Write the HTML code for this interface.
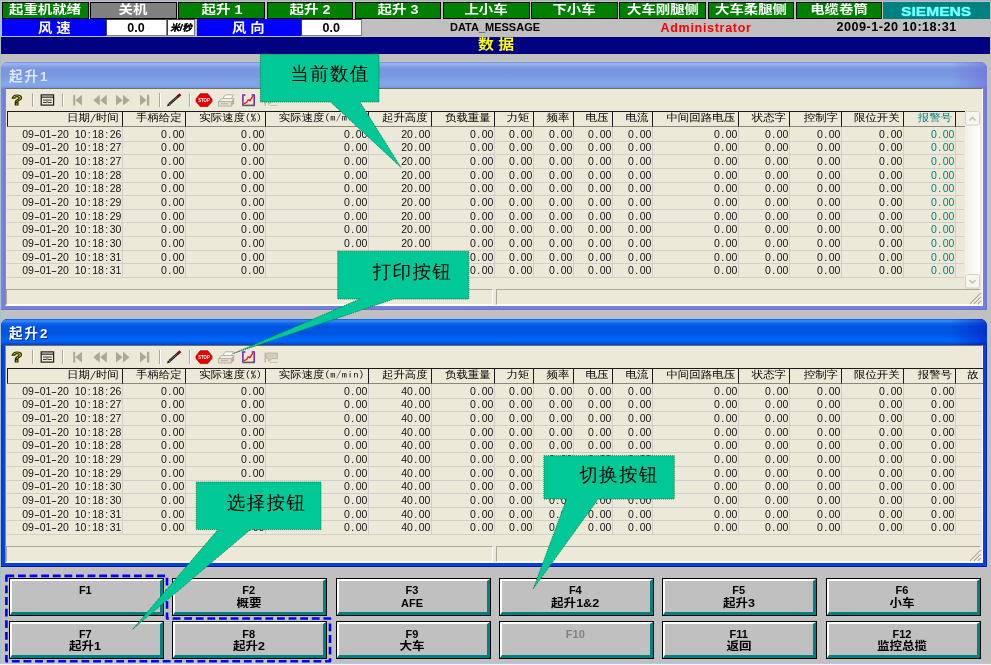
<!DOCTYPE html>
<html lang="zh"><head><meta charset="utf-8"><title>数据</title><style>
html,body{margin:0;padding:0}
body{width:991px;height:665px;background:#c0c0c0;position:relative;overflow:hidden;font-family:"Liberation Sans","Noto Sans CJK SC",sans-serif;font-size:12px;color:#000}
*{box-sizing:border-box}
div,span,svg{position:absolute}
.tc{top:2px;height:17px;border:1px solid #000;background:#008000;color:#fff;font-weight:bold;font-size:12px;line-height:15.8px;text-align:center;white-space:nowrap;overflow:hidden}
.tc span,.sx{position:relative;display:inline-block}
.lb{top:19px;height:17px;background:#0000ff;color:#fff;font-weight:bold;font-size:12.6px;line-height:16px;text-align:center}
.vb{top:19px;height:17px;background:#fff;border:1px solid #404040;border-right-color:#808080;border-bottom-color:#808080;font-weight:bold;font-size:12.5px;line-height:16.4px;text-align:center}
.t2{top:19px;height:17px;font-weight:bold;line-height:17px;white-space:nowrap}
.win{left:1px;width:986px;height:248px;border-radius:7px 7px 0 0;overflow:hidden}
.ttl{left:0;top:0;width:986px;height:26px}
.ttxt{left:8px;top:6.5px;color:#fff;font-weight:bold;font-size:13.5px;line-height:16px;white-space:nowrap;letter-spacing:2px}
.cli{left:4px;top:26px;width:978px;height:218px;background:#ece9d8;border-top:1px solid #716f64;border-left:1px solid #8f8d80;border-right:1px solid #fff;border-bottom:1px solid #fff}
/*hd*/.hd{background:#ece9d8;border-top:1px solid #1a1a1a;border-right:1px solid #1a1a1a;border-bottom:1px solid #8a887c;font-family:"WenQuanYi Zen Hei","Noto Sans CJK SC",sans-serif;font-size:11.7px;line-height:11.4px;text-align:right;white-space:nowrap;overflow:hidden;height:15.5px}
.hd span{position:relative;display:inline-block;transform:scale(0.98,0.88);transform-origin:100% 45%}
.hd i{font-style:normal;font-family:"IPAGothic","Liberation Mono",monospace;font-size:10.6px;letter-spacing:0.55px}
.vl{width:1px;background:#d0cfcb}
.hl{height:1px;background:#d0cfcb}
.c{font-family:"Liberation Sans",sans-serif;font-size:10.5px;line-height:13.65px;height:13.65px;text-align:right;white-space:pre;color:#111}
.c i{font-style:normal;display:inline-block;width:5.84px;text-align:center}
.c i.h{transform:scaleX(1.7)}
.btn{width:155px;height:38px;border:1px solid #000;background:#c0c0c0}
.btn b{position:absolute;left:0;top:0;width:153px;height:36px;border-style:solid;border-width:2px 3px 3px 2px;border-color:#fff #008080 #008080 #fff}
.btn p{position:absolute;margin:0;left:-1px;width:153px;top:5.4px;text-align:center;font-weight:bold;font-size:11px;line-height:12.5px;white-space:pre}
.co{font-family:"WenQuanYi Zen Hei","Noto Sans CJK SC",sans-serif;font-size:18.6px;line-height:20px;white-space:nowrap;color:#000;letter-spacing:1.2px}
</style></head><body><div id="root" style="left:0;top:0;width:991px;height:665px;will-change:transform">
<div class="tc" style="left:2.0px;width:86.6px"><span style="transform:scaleX(1.2)">起重机就绪</span></div>
<div class="tc" style="left:90.2px;width:86.6px;background:#808080"><span style="transform:scaleX(1.2)">关机</span></div>
<div class="tc" style="left:178.4px;width:86.6px"><span style="transform:scaleX(1.2)">起升 1</span></div>
<div class="tc" style="left:266.6px;width:86.6px"><span style="transform:scaleX(1.2)">起升 2</span></div>
<div class="tc" style="left:354.8px;width:86.6px"><span style="transform:scaleX(1.2)">起升 3</span></div>
<div class="tc" style="left:443.0px;width:86.6px"><span style="transform:scaleX(1.2)">上小车</span></div>
<div class="tc" style="left:531.2px;width:86.6px"><span style="transform:scaleX(1.2)">下小车</span></div>
<div class="tc" style="left:619.4px;width:86.6px"><span style="transform:scaleX(1.2)">大车刚腿侧</span></div>
<div class="tc" style="left:707.6px;width:86.6px"><span style="transform:scaleX(1.2)">大车柔腿侧</span></div>
<div class="tc" style="left:795.8px;width:86.6px"><span style="transform:scaleX(1.2)">电缆卷筒</span></div>
<div style="left:883px;top:2px;width:107px;height:17px;background:#008080;text-align:center;color:#8cffff;font-weight:bold;font-size:12.5px;line-height:20px;text-shadow:0 0 1px #00f4f4,0 0 1px #00f4f4"><span class="sx" style="transform:scaleX(1.25)">SIEMENS</span></div>
<div class="lb" style="left:2px;width:104px"><span class="sx" style="transform:scaleX(1.14);top:0.6px">风 速</span></div>
<div class="vb" style="left:105.5px;width:61px">0.0</div>
<div class="vb" style="left:166.5px;width:28.5px;font-size:9.5px;font-style:italic;letter-spacing:0;text-shadow:0.4px 0 0 #000">米/秒</div>
<div class="lb" style="left:196.5px;width:104.5px"><span class="sx" style="transform:scaleX(1.14);top:0.6px">风 向</span></div>
<div class="vb" style="left:300.5px;width:61.5px">0.0</div>
<div class="t2" style="left:450px;font-size:11px">DATA_MESSAGE</div>
<div class="t2" style="left:660.5px;top:20px;font-size:12.5px;color:#ff0000;letter-spacing:0.7px">Administrator</div>
<div class="t2" style="left:836.5px;font-size:12.7px;letter-spacing:0.45px">2009-1-20 10:18:31</div>
<div style="left:1px;top:37px;width:989px;height:17px;background:#000080;color:#ffff00;font-weight:bold;font-size:14px;line-height:15px;text-align:center"><span class="sx" style="transform:scaleX(1.13)">数 据</span></div>
<div class="win" style="top:62px;background:#7580dc;box-shadow:inset 0 -1px 0 #6a6fd0,inset 1px 0 0 #7a8ae0,inset -1px 0 0 #6c72d2"><div class="ttl" style="background:linear-gradient(180deg,#6f8fe2 0,#9db6ec 7%,#8aa5e6 15%,#7996df 26%,#7a98e0 55%,#84a7ea 80%,#82a4e8 92%,#7a92df 100%)"></div><div style="left:950px;top:0;width:36px;height:26px;background:linear-gradient(90deg,rgba(0,0,0,0),rgba(112,104,216,0.6))"></div><div class="ttxt" style="color:#dfe6fa">起升1</div><div class="cli"></div></div>
<svg style="left:5px;top:89px" width="290" height="23" viewBox="0 0 290 23"><text x="6.6" y="16.3" font-family="Liberation Sans,sans-serif" font-weight="bold" font-size="15" fill="#e8e400" stroke="#2e2e00" stroke-width="1.1" textLength="11" lengthAdjust="spacingAndGlyphs">?</text><rect x="27" y="4" width="1" height="14" fill="#aca899"/><rect x="28" y="4" width="1" height="14" fill="#fff"/><rect x="36.2" y="5.9" width="12.4" height="10.2" fill="#ece9d8" stroke="#1c1c1c" stroke-width="1.2"/><rect x="36" y="7.6" width="12.6" height="1.1" fill="#1c1c1c"/><rect x="38" y="10.6" width="8.8" height="1" fill="#3a3a3a"/><rect x="38" y="13" width="8.8" height="1" fill="#3a3a3a"/><rect x="41.5" y="10.6" width="1.6" height="3.4" fill="#8a8a8a"/><rect x="57" y="4" width="1" height="14" fill="#aca899"/><rect x="58" y="4" width="1" height="14" fill="#fff"/><rect x="68.2" y="5.8" width="2" height="10.8" fill="#aca899"/><path d="M77 5.8 L70.4 11.2 L77 16.6Z" fill="#aca899"/><path d="M94.8 5.8 L88.2 11.2 L94.8 16.6Z M101.8 5.8 L95.2 11.2 L101.8 16.6Z" fill="#aca899"/><path d="M111 5.8 L117.6 11.2 L111 16.6Z M118 5.8 L124.6 11.2 L118 16.6Z" fill="#aca899"/><path d="M135 5.8 L141.6 11.2 L135 16.6Z" fill="#aca899"/><rect x="142" y="5.8" width="2.2" height="10.8" fill="#aca899"/><rect x="154" y="4" width="1" height="14" fill="#aca899"/><rect x="155" y="4" width="1" height="14" fill="#fff"/><path d="M164.4 15 L173 7.4" stroke="#1e1e1e" stroke-width="2.5" fill="none"/><path d="M164.6 14.8 L172.6 7.7" stroke="#8a8880" stroke-width="0.7" fill="none"/><path d="M162 17.4 L163 14.2 L165.4 16.2 Z" fill="#1e1e1e"/><path d="M172.6 7.8 L175.4 5.3" stroke="#8e0016" stroke-width="2.7" fill="none"/><rect x="184" y="4" width="1" height="14" fill="#aca899"/><rect x="185" y="4" width="1" height="14" fill="#fff"/><path d="M195.2 4.7 L202.8 4.7 L207 10 L207 12.4 L202.8 17.6 L195.2 17.6 L191 12.4 L191 10Z" fill="#e60000" stroke="#b00000" stroke-width="0.7"/><text x="199" y="13.4" text-anchor="middle" font-family="Liberation Sans,sans-serif" font-weight="bold" font-size="5.6" fill="#fff" textLength="11.5" lengthAdjust="spacingAndGlyphs">STOP</text><path d="M217.5 9.8 L220.5 5.8 L228.6 5.8 L226.2 9.8 Z" fill="#fbfaf6" stroke="#b4b1a2" stroke-width="1"/><path d="M213.6 12.6 L216.6 9.6 L229 9.6 L226.6 12.6 Z" fill="#f2f0e6" stroke="#b4b1a2" stroke-width="1"/><rect x="213.6" y="12.6" width="13" height="4.4" fill="#e2dfd0" stroke="#b4b1a2" stroke-width="1"/><path d="M226.6 12.6 L229.2 9.8 L229.2 14.2 L226.6 17Z" fill="#b4b1a2"/><rect x="216" y="14.2" width="7" height="1" fill="#b4b1a2"/><rect x="237.2" y="15.6" width="12.8" height="1.6" fill="#5a5a5a"/><path d="M240.4 6 H237.9 V16 M246.6 6 H249.2 V16" fill="none" stroke="#7a1fa8" stroke-width="1.5"/><path d="M239 14.6 L241.6 13.6 L243.2 10.8 L245 11.6 L247.8 7.2" fill="none" stroke="#e8141c" stroke-width="1.3"/><path d="M260.2 6.4 V16.6" stroke="#b4b1a2" stroke-width="1.3" fill="none"/><path d="M261.6 7 H272.4 V12.6 H267 L263.6 15.6 V12.6 H261.6 Z" fill="#d0cdbe" stroke="#b9b6a8" stroke-width="0.9"/><path d="M265 16.4 H272.6" stroke="#c4c1b2" stroke-width="1"/></svg>
<div class="hd" style="left:7px;top:111px;width:116px;padding-right:3.2px;border-left:1px solid #1a1a1a"><span>日期/时间</span></div>
<div class="hd" style="left:123px;top:111px;width:63px;padding-right:3.2px"><span>手柄给定</span></div>
<div class="hd" style="left:186px;top:111px;width:80px;padding-right:3.2px"><span>实际速度<i>(%)</i></span></div>
<div class="hd" style="left:266px;top:111px;width:103px;padding-right:3.2px"><span>实际速度<i>(m/min)</i></span></div>
<div class="hd" style="left:369px;top:111px;width:63px;padding-right:3.2px"><span>起升高度</span></div>
<div class="hd" style="left:432px;top:111px;width:63px;padding-right:3.2px"><span>负载重量</span></div>
<div class="hd" style="left:495px;top:111px;width:39px;padding-right:3.2px"><span>力矩</span></div>
<div class="hd" style="left:534px;top:111px;width:40px;padding-right:3.2px"><span>频率</span></div>
<div class="hd" style="left:574px;top:111px;width:39px;padding-right:3.2px"><span>电压</span></div>
<div class="hd" style="left:613px;top:111px;width:40px;padding-right:3.2px"><span>电流</span></div>
<div class="hd" style="left:653px;top:111px;width:86px;padding-right:3.2px"><span>中间回路电压</span></div>
<div class="hd" style="left:739px;top:111px;width:51px;padding-right:3.2px"><span>状态字</span></div>
<div class="hd" style="left:790px;top:111px;width:52px;padding-right:3.2px"><span>控制字</span></div>
<div class="hd" style="left:842px;top:111px;width:62px;padding-right:3.2px"><span>限位开关</span></div>
<div class="hd" style="left:904px;top:111px;width:52px;padding-right:3.2px;color:#008080"><span>报警号</span></div>
<div class="hd" style="left:956px;top:111px;width:9px;border-right:none"></div>
<div class="hl" style="left:7px;top:141px;width:957px"></div>
<div class="hl" style="left:7px;top:154px;width:957px"></div>
<div class="hl" style="left:7px;top:168px;width:957px"></div>
<div class="hl" style="left:7px;top:182px;width:957px"></div>
<div class="hl" style="left:7px;top:195px;width:957px"></div>
<div class="hl" style="left:7px;top:209px;width:957px"></div>
<div class="hl" style="left:7px;top:222px;width:957px"></div>
<div class="hl" style="left:7px;top:236px;width:957px"></div>
<div class="hl" style="left:7px;top:250px;width:957px"></div>
<div class="hl" style="left:7px;top:263px;width:957px"></div>
<div class="hl" style="left:7px;top:277px;width:957px"></div>
<div class="vl" style="left:122px;top:127px;height:150px"></div>
<div class="vl" style="left:185px;top:127px;height:150px"></div>
<div class="vl" style="left:265px;top:127px;height:150px"></div>
<div class="vl" style="left:368px;top:127px;height:150px"></div>
<div class="vl" style="left:431px;top:127px;height:150px"></div>
<div class="vl" style="left:494px;top:127px;height:150px"></div>
<div class="vl" style="left:533px;top:127px;height:150px"></div>
<div class="vl" style="left:573px;top:127px;height:150px"></div>
<div class="vl" style="left:612px;top:127px;height:150px"></div>
<div class="vl" style="left:652px;top:127px;height:150px"></div>
<div class="vl" style="left:738px;top:127px;height:150px"></div>
<div class="vl" style="left:789px;top:127px;height:150px"></div>
<div class="vl" style="left:841px;top:127px;height:150px"></div>
<div class="vl" style="left:903px;top:127px;height:150px"></div>
<div class="vl" style="left:955px;top:127px;height:150px"></div>
<div class="c" style="left:7px;top:127.70px;width:114.4px">09<i class="h">-</i>01<i class="h">-</i>20<i> </i>10<i>:</i>18<i>:</i>26</div>
<div class="c" style="left:122px;top:127.70px;width:62.4px">0<i>.</i>00</div>
<div class="c" style="left:185px;top:127.70px;width:79.4px">0<i>.</i>00</div>
<div class="c" style="left:265px;top:127.70px;width:102.4px">0<i>.</i>00</div>
<div class="c" style="left:368px;top:127.70px;width:62.4px">20<i>.</i>00</div>
<div class="c" style="left:431px;top:127.70px;width:62.4px">0<i>.</i>00</div>
<div class="c" style="left:494px;top:127.70px;width:38.4px">0<i>.</i>00</div>
<div class="c" style="left:533px;top:127.70px;width:39.4px">0<i>.</i>00</div>
<div class="c" style="left:573px;top:127.70px;width:38.4px">0<i>.</i>00</div>
<div class="c" style="left:612px;top:127.70px;width:39.4px">0<i>.</i>00</div>
<div class="c" style="left:652px;top:127.70px;width:85.4px">0<i>.</i>00</div>
<div class="c" style="left:738px;top:127.70px;width:50.4px">0<i>.</i>00</div>
<div class="c" style="left:789px;top:127.70px;width:51.4px">0<i>.</i>00</div>
<div class="c" style="left:841px;top:127.70px;width:61.4px">0<i>.</i>00</div>
<div class="c" style="left:903px;top:127.70px;width:51.4px;color:#008080">0<i>.</i>00</div>
<div class="c" style="left:7px;top:141.35px;width:114.4px">09<i class="h">-</i>01<i class="h">-</i>20<i> </i>10<i>:</i>18<i>:</i>27</div>
<div class="c" style="left:122px;top:141.35px;width:62.4px">0<i>.</i>00</div>
<div class="c" style="left:185px;top:141.35px;width:79.4px">0<i>.</i>00</div>
<div class="c" style="left:265px;top:141.35px;width:102.4px">0<i>.</i>00</div>
<div class="c" style="left:368px;top:141.35px;width:62.4px">20<i>.</i>00</div>
<div class="c" style="left:431px;top:141.35px;width:62.4px">0<i>.</i>00</div>
<div class="c" style="left:494px;top:141.35px;width:38.4px">0<i>.</i>00</div>
<div class="c" style="left:533px;top:141.35px;width:39.4px">0<i>.</i>00</div>
<div class="c" style="left:573px;top:141.35px;width:38.4px">0<i>.</i>00</div>
<div class="c" style="left:612px;top:141.35px;width:39.4px">0<i>.</i>00</div>
<div class="c" style="left:652px;top:141.35px;width:85.4px">0<i>.</i>00</div>
<div class="c" style="left:738px;top:141.35px;width:50.4px">0<i>.</i>00</div>
<div class="c" style="left:789px;top:141.35px;width:51.4px">0<i>.</i>00</div>
<div class="c" style="left:841px;top:141.35px;width:61.4px">0<i>.</i>00</div>
<div class="c" style="left:903px;top:141.35px;width:51.4px;color:#008080">0<i>.</i>00</div>
<div class="c" style="left:7px;top:155.00px;width:114.4px">09<i class="h">-</i>01<i class="h">-</i>20<i> </i>10<i>:</i>18<i>:</i>27</div>
<div class="c" style="left:122px;top:155.00px;width:62.4px">0<i>.</i>00</div>
<div class="c" style="left:185px;top:155.00px;width:79.4px">0<i>.</i>00</div>
<div class="c" style="left:265px;top:155.00px;width:102.4px">0<i>.</i>00</div>
<div class="c" style="left:368px;top:155.00px;width:62.4px">20<i>.</i>00</div>
<div class="c" style="left:431px;top:155.00px;width:62.4px">0<i>.</i>00</div>
<div class="c" style="left:494px;top:155.00px;width:38.4px">0<i>.</i>00</div>
<div class="c" style="left:533px;top:155.00px;width:39.4px">0<i>.</i>00</div>
<div class="c" style="left:573px;top:155.00px;width:38.4px">0<i>.</i>00</div>
<div class="c" style="left:612px;top:155.00px;width:39.4px">0<i>.</i>00</div>
<div class="c" style="left:652px;top:155.00px;width:85.4px">0<i>.</i>00</div>
<div class="c" style="left:738px;top:155.00px;width:50.4px">0<i>.</i>00</div>
<div class="c" style="left:789px;top:155.00px;width:51.4px">0<i>.</i>00</div>
<div class="c" style="left:841px;top:155.00px;width:61.4px">0<i>.</i>00</div>
<div class="c" style="left:903px;top:155.00px;width:51.4px;color:#008080">0<i>.</i>00</div>
<div class="c" style="left:7px;top:168.65px;width:114.4px">09<i class="h">-</i>01<i class="h">-</i>20<i> </i>10<i>:</i>18<i>:</i>28</div>
<div class="c" style="left:122px;top:168.65px;width:62.4px">0<i>.</i>00</div>
<div class="c" style="left:185px;top:168.65px;width:79.4px">0<i>.</i>00</div>
<div class="c" style="left:265px;top:168.65px;width:102.4px">0<i>.</i>00</div>
<div class="c" style="left:368px;top:168.65px;width:62.4px">20<i>.</i>00</div>
<div class="c" style="left:431px;top:168.65px;width:62.4px">0<i>.</i>00</div>
<div class="c" style="left:494px;top:168.65px;width:38.4px">0<i>.</i>00</div>
<div class="c" style="left:533px;top:168.65px;width:39.4px">0<i>.</i>00</div>
<div class="c" style="left:573px;top:168.65px;width:38.4px">0<i>.</i>00</div>
<div class="c" style="left:612px;top:168.65px;width:39.4px">0<i>.</i>00</div>
<div class="c" style="left:652px;top:168.65px;width:85.4px">0<i>.</i>00</div>
<div class="c" style="left:738px;top:168.65px;width:50.4px">0<i>.</i>00</div>
<div class="c" style="left:789px;top:168.65px;width:51.4px">0<i>.</i>00</div>
<div class="c" style="left:841px;top:168.65px;width:61.4px">0<i>.</i>00</div>
<div class="c" style="left:903px;top:168.65px;width:51.4px;color:#008080">0<i>.</i>00</div>
<div class="c" style="left:7px;top:182.30px;width:114.4px">09<i class="h">-</i>01<i class="h">-</i>20<i> </i>10<i>:</i>18<i>:</i>28</div>
<div class="c" style="left:122px;top:182.30px;width:62.4px">0<i>.</i>00</div>
<div class="c" style="left:185px;top:182.30px;width:79.4px">0<i>.</i>00</div>
<div class="c" style="left:265px;top:182.30px;width:102.4px">0<i>.</i>00</div>
<div class="c" style="left:368px;top:182.30px;width:62.4px">20<i>.</i>00</div>
<div class="c" style="left:431px;top:182.30px;width:62.4px">0<i>.</i>00</div>
<div class="c" style="left:494px;top:182.30px;width:38.4px">0<i>.</i>00</div>
<div class="c" style="left:533px;top:182.30px;width:39.4px">0<i>.</i>00</div>
<div class="c" style="left:573px;top:182.30px;width:38.4px">0<i>.</i>00</div>
<div class="c" style="left:612px;top:182.30px;width:39.4px">0<i>.</i>00</div>
<div class="c" style="left:652px;top:182.30px;width:85.4px">0<i>.</i>00</div>
<div class="c" style="left:738px;top:182.30px;width:50.4px">0<i>.</i>00</div>
<div class="c" style="left:789px;top:182.30px;width:51.4px">0<i>.</i>00</div>
<div class="c" style="left:841px;top:182.30px;width:61.4px">0<i>.</i>00</div>
<div class="c" style="left:903px;top:182.30px;width:51.4px;color:#008080">0<i>.</i>00</div>
<div class="c" style="left:7px;top:195.95px;width:114.4px">09<i class="h">-</i>01<i class="h">-</i>20<i> </i>10<i>:</i>18<i>:</i>29</div>
<div class="c" style="left:122px;top:195.95px;width:62.4px">0<i>.</i>00</div>
<div class="c" style="left:185px;top:195.95px;width:79.4px">0<i>.</i>00</div>
<div class="c" style="left:265px;top:195.95px;width:102.4px">0<i>.</i>00</div>
<div class="c" style="left:368px;top:195.95px;width:62.4px">20<i>.</i>00</div>
<div class="c" style="left:431px;top:195.95px;width:62.4px">0<i>.</i>00</div>
<div class="c" style="left:494px;top:195.95px;width:38.4px">0<i>.</i>00</div>
<div class="c" style="left:533px;top:195.95px;width:39.4px">0<i>.</i>00</div>
<div class="c" style="left:573px;top:195.95px;width:38.4px">0<i>.</i>00</div>
<div class="c" style="left:612px;top:195.95px;width:39.4px">0<i>.</i>00</div>
<div class="c" style="left:652px;top:195.95px;width:85.4px">0<i>.</i>00</div>
<div class="c" style="left:738px;top:195.95px;width:50.4px">0<i>.</i>00</div>
<div class="c" style="left:789px;top:195.95px;width:51.4px">0<i>.</i>00</div>
<div class="c" style="left:841px;top:195.95px;width:61.4px">0<i>.</i>00</div>
<div class="c" style="left:903px;top:195.95px;width:51.4px;color:#008080">0<i>.</i>00</div>
<div class="c" style="left:7px;top:209.60px;width:114.4px">09<i class="h">-</i>01<i class="h">-</i>20<i> </i>10<i>:</i>18<i>:</i>29</div>
<div class="c" style="left:122px;top:209.60px;width:62.4px">0<i>.</i>00</div>
<div class="c" style="left:185px;top:209.60px;width:79.4px">0<i>.</i>00</div>
<div class="c" style="left:265px;top:209.60px;width:102.4px">0<i>.</i>00</div>
<div class="c" style="left:368px;top:209.60px;width:62.4px">20<i>.</i>00</div>
<div class="c" style="left:431px;top:209.60px;width:62.4px">0<i>.</i>00</div>
<div class="c" style="left:494px;top:209.60px;width:38.4px">0<i>.</i>00</div>
<div class="c" style="left:533px;top:209.60px;width:39.4px">0<i>.</i>00</div>
<div class="c" style="left:573px;top:209.60px;width:38.4px">0<i>.</i>00</div>
<div class="c" style="left:612px;top:209.60px;width:39.4px">0<i>.</i>00</div>
<div class="c" style="left:652px;top:209.60px;width:85.4px">0<i>.</i>00</div>
<div class="c" style="left:738px;top:209.60px;width:50.4px">0<i>.</i>00</div>
<div class="c" style="left:789px;top:209.60px;width:51.4px">0<i>.</i>00</div>
<div class="c" style="left:841px;top:209.60px;width:61.4px">0<i>.</i>00</div>
<div class="c" style="left:903px;top:209.60px;width:51.4px;color:#008080">0<i>.</i>00</div>
<div class="c" style="left:7px;top:223.25px;width:114.4px">09<i class="h">-</i>01<i class="h">-</i>20<i> </i>10<i>:</i>18<i>:</i>30</div>
<div class="c" style="left:122px;top:223.25px;width:62.4px">0<i>.</i>00</div>
<div class="c" style="left:185px;top:223.25px;width:79.4px">0<i>.</i>00</div>
<div class="c" style="left:265px;top:223.25px;width:102.4px">0<i>.</i>00</div>
<div class="c" style="left:368px;top:223.25px;width:62.4px">20<i>.</i>00</div>
<div class="c" style="left:431px;top:223.25px;width:62.4px">0<i>.</i>00</div>
<div class="c" style="left:494px;top:223.25px;width:38.4px">0<i>.</i>00</div>
<div class="c" style="left:533px;top:223.25px;width:39.4px">0<i>.</i>00</div>
<div class="c" style="left:573px;top:223.25px;width:38.4px">0<i>.</i>00</div>
<div class="c" style="left:612px;top:223.25px;width:39.4px">0<i>.</i>00</div>
<div class="c" style="left:652px;top:223.25px;width:85.4px">0<i>.</i>00</div>
<div class="c" style="left:738px;top:223.25px;width:50.4px">0<i>.</i>00</div>
<div class="c" style="left:789px;top:223.25px;width:51.4px">0<i>.</i>00</div>
<div class="c" style="left:841px;top:223.25px;width:61.4px">0<i>.</i>00</div>
<div class="c" style="left:903px;top:223.25px;width:51.4px;color:#008080">0<i>.</i>00</div>
<div class="c" style="left:7px;top:236.90px;width:114.4px">09<i class="h">-</i>01<i class="h">-</i>20<i> </i>10<i>:</i>18<i>:</i>30</div>
<div class="c" style="left:122px;top:236.90px;width:62.4px">0<i>.</i>00</div>
<div class="c" style="left:185px;top:236.90px;width:79.4px">0<i>.</i>00</div>
<div class="c" style="left:265px;top:236.90px;width:102.4px">0<i>.</i>00</div>
<div class="c" style="left:368px;top:236.90px;width:62.4px">20<i>.</i>00</div>
<div class="c" style="left:431px;top:236.90px;width:62.4px">0<i>.</i>00</div>
<div class="c" style="left:494px;top:236.90px;width:38.4px">0<i>.</i>00</div>
<div class="c" style="left:533px;top:236.90px;width:39.4px">0<i>.</i>00</div>
<div class="c" style="left:573px;top:236.90px;width:38.4px">0<i>.</i>00</div>
<div class="c" style="left:612px;top:236.90px;width:39.4px">0<i>.</i>00</div>
<div class="c" style="left:652px;top:236.90px;width:85.4px">0<i>.</i>00</div>
<div class="c" style="left:738px;top:236.90px;width:50.4px">0<i>.</i>00</div>
<div class="c" style="left:789px;top:236.90px;width:51.4px">0<i>.</i>00</div>
<div class="c" style="left:841px;top:236.90px;width:61.4px">0<i>.</i>00</div>
<div class="c" style="left:903px;top:236.90px;width:51.4px;color:#008080">0<i>.</i>00</div>
<div class="c" style="left:7px;top:250.55px;width:114.4px">09<i class="h">-</i>01<i class="h">-</i>20<i> </i>10<i>:</i>18<i>:</i>31</div>
<div class="c" style="left:122px;top:250.55px;width:62.4px">0<i>.</i>00</div>
<div class="c" style="left:185px;top:250.55px;width:79.4px">0<i>.</i>00</div>
<div class="c" style="left:265px;top:250.55px;width:102.4px">0<i>.</i>00</div>
<div class="c" style="left:368px;top:250.55px;width:62.4px">20<i>.</i>00</div>
<div class="c" style="left:431px;top:250.55px;width:62.4px">0<i>.</i>00</div>
<div class="c" style="left:494px;top:250.55px;width:38.4px">0<i>.</i>00</div>
<div class="c" style="left:533px;top:250.55px;width:39.4px">0<i>.</i>00</div>
<div class="c" style="left:573px;top:250.55px;width:38.4px">0<i>.</i>00</div>
<div class="c" style="left:612px;top:250.55px;width:39.4px">0<i>.</i>00</div>
<div class="c" style="left:652px;top:250.55px;width:85.4px">0<i>.</i>00</div>
<div class="c" style="left:738px;top:250.55px;width:50.4px">0<i>.</i>00</div>
<div class="c" style="left:789px;top:250.55px;width:51.4px">0<i>.</i>00</div>
<div class="c" style="left:841px;top:250.55px;width:61.4px">0<i>.</i>00</div>
<div class="c" style="left:903px;top:250.55px;width:51.4px;color:#008080">0<i>.</i>00</div>
<div class="c" style="left:7px;top:264.20px;width:114.4px">09<i class="h">-</i>01<i class="h">-</i>20<i> </i>10<i>:</i>18<i>:</i>31</div>
<div class="c" style="left:122px;top:264.20px;width:62.4px">0<i>.</i>00</div>
<div class="c" style="left:185px;top:264.20px;width:79.4px">0<i>.</i>00</div>
<div class="c" style="left:265px;top:264.20px;width:102.4px">0<i>.</i>00</div>
<div class="c" style="left:368px;top:264.20px;width:62.4px">20<i>.</i>00</div>
<div class="c" style="left:431px;top:264.20px;width:62.4px">0<i>.</i>00</div>
<div class="c" style="left:494px;top:264.20px;width:38.4px">0<i>.</i>00</div>
<div class="c" style="left:533px;top:264.20px;width:39.4px">0<i>.</i>00</div>
<div class="c" style="left:573px;top:264.20px;width:38.4px">0<i>.</i>00</div>
<div class="c" style="left:612px;top:264.20px;width:39.4px">0<i>.</i>00</div>
<div class="c" style="left:652px;top:264.20px;width:85.4px">0<i>.</i>00</div>
<div class="c" style="left:738px;top:264.20px;width:50.4px">0<i>.</i>00</div>
<div class="c" style="left:789px;top:264.20px;width:51.4px">0<i>.</i>00</div>
<div class="c" style="left:841px;top:264.20px;width:61.4px">0<i>.</i>00</div>
<div class="c" style="left:903px;top:264.20px;width:51.4px;color:#008080">0<i>.</i>00</div>
<div style="left:6px;top:289.0px;width:487px;height:16px;border:1px solid;border-color:#aca899 #fff #fff #aca899"></div>
<div style="left:495.5px;top:289.0px;width:485.5px;height:16px;border:1px solid;border-color:#aca899 #fff #fff #aca899"></div>
<svg style="left:969px;top:292.0px" width="13" height="13" viewBox="0 0 13 13"><path d="M12 1 L1 12 M12 5 L5 12 M12 9 L9 12" stroke="#aca899" stroke-width="1.3"/><path d="M12 2.3 L2.3 12 M12 6.3 L6.3 12 M12 10.3 L10.3 12" stroke="#fff" stroke-width="0.8"/></svg>
<div style="left:965px;top:111.5px;width:15px;height:175.5px;background:linear-gradient(90deg,#f0efe8,#fefefc)"></div>
<svg style="left:965px;top:110.5px" width="15" height="15" viewBox="0 0 15 15"><rect x="0.5" y="0.5" width="14" height="13.5" rx="2" fill="#f6f5ef" stroke="#d2cfc2"/><path d="M4.5 9.5 L7.5 6.5 L10.5 9.5" fill="none" stroke="#c6c4b6" stroke-width="1.6"/></svg>
<svg style="left:965px;top:273.5px" width="15" height="15" viewBox="0 0 15 15"><rect x="0.5" y="0.5" width="14" height="13.5" rx="2" fill="#f6f5ef" stroke="#d2cfc2"/><path d="M4.5 6 L7.5 9 L10.5 6" fill="none" stroke="#c6c4b6" stroke-width="1.6"/></svg>
<div class="win" style="top:319px;background:#0842de;box-shadow:inset 0 -1px 0 #001c9c,inset 1px 0 0 #0430c0,inset -1px 0 0 #0022b0"><div class="ttl" style="background:linear-gradient(180deg,#0a58e6 0,#3a8cf8 7%,#1068ee 16%,#0055e2 28%,#0054e0 55%,#0062f4 75%,#0064f6 88%,#0048d6 96%,#0040c8 100%)"></div><div style="left:950px;top:0;width:36px;height:26px;background:linear-gradient(90deg,rgba(0,0,0,0),rgba(0,20,190,0.55))"></div><div class="ttxt" style="text-shadow:1px 1px 0 #0a2a9a">起升2</div><div class="cli"></div></div>
<svg style="left:5px;top:346px" width="290" height="23" viewBox="0 0 290 23"><text x="6.6" y="16.3" font-family="Liberation Sans,sans-serif" font-weight="bold" font-size="15" fill="#e8e400" stroke="#2e2e00" stroke-width="1.1" textLength="11" lengthAdjust="spacingAndGlyphs">?</text><rect x="27" y="4" width="1" height="14" fill="#aca899"/><rect x="28" y="4" width="1" height="14" fill="#fff"/><rect x="36.2" y="5.9" width="12.4" height="10.2" fill="#ece9d8" stroke="#1c1c1c" stroke-width="1.2"/><rect x="36" y="7.6" width="12.6" height="1.1" fill="#1c1c1c"/><rect x="38" y="10.6" width="8.8" height="1" fill="#3a3a3a"/><rect x="38" y="13" width="8.8" height="1" fill="#3a3a3a"/><rect x="41.5" y="10.6" width="1.6" height="3.4" fill="#8a8a8a"/><rect x="57" y="4" width="1" height="14" fill="#aca899"/><rect x="58" y="4" width="1" height="14" fill="#fff"/><rect x="68.2" y="5.8" width="2" height="10.8" fill="#aca899"/><path d="M77 5.8 L70.4 11.2 L77 16.6Z" fill="#aca899"/><path d="M94.8 5.8 L88.2 11.2 L94.8 16.6Z M101.8 5.8 L95.2 11.2 L101.8 16.6Z" fill="#aca899"/><path d="M111 5.8 L117.6 11.2 L111 16.6Z M118 5.8 L124.6 11.2 L118 16.6Z" fill="#aca899"/><path d="M135 5.8 L141.6 11.2 L135 16.6Z" fill="#aca899"/><rect x="142" y="5.8" width="2.2" height="10.8" fill="#aca899"/><rect x="154" y="4" width="1" height="14" fill="#aca899"/><rect x="155" y="4" width="1" height="14" fill="#fff"/><path d="M164.4 15 L173 7.4" stroke="#1e1e1e" stroke-width="2.5" fill="none"/><path d="M164.6 14.8 L172.6 7.7" stroke="#8a8880" stroke-width="0.7" fill="none"/><path d="M162 17.4 L163 14.2 L165.4 16.2 Z" fill="#1e1e1e"/><path d="M172.6 7.8 L175.4 5.3" stroke="#8e0016" stroke-width="2.7" fill="none"/><rect x="184" y="4" width="1" height="14" fill="#aca899"/><rect x="185" y="4" width="1" height="14" fill="#fff"/><path d="M195.2 4.7 L202.8 4.7 L207 10 L207 12.4 L202.8 17.6 L195.2 17.6 L191 12.4 L191 10Z" fill="#e60000" stroke="#b00000" stroke-width="0.7"/><text x="199" y="13.4" text-anchor="middle" font-family="Liberation Sans,sans-serif" font-weight="bold" font-size="5.6" fill="#fff" textLength="11.5" lengthAdjust="spacingAndGlyphs">STOP</text><path d="M217.5 9.8 L220.5 5.8 L228.6 5.8 L226.2 9.8 Z" fill="#fbfaf6" stroke="#b4b1a2" stroke-width="1"/><path d="M213.6 12.6 L216.6 9.6 L229 9.6 L226.6 12.6 Z" fill="#f2f0e6" stroke="#b4b1a2" stroke-width="1"/><rect x="213.6" y="12.6" width="13" height="4.4" fill="#e2dfd0" stroke="#b4b1a2" stroke-width="1"/><path d="M226.6 12.6 L229.2 9.8 L229.2 14.2 L226.6 17Z" fill="#b4b1a2"/><rect x="216" y="14.2" width="7" height="1" fill="#b4b1a2"/><rect x="237.2" y="15.6" width="12.8" height="1.6" fill="#5a5a5a"/><path d="M240.4 6 H237.9 V16 M246.6 6 H249.2 V16" fill="none" stroke="#7a1fa8" stroke-width="1.5"/><path d="M239 14.6 L241.6 13.6 L243.2 10.8 L245 11.6 L247.8 7.2" fill="none" stroke="#e8141c" stroke-width="1.3"/><path d="M260.2 6.4 V16.6" stroke="#b4b1a2" stroke-width="1.3" fill="none"/><path d="M261.6 7 H272.4 V12.6 H267 L263.6 15.6 V12.6 H261.6 Z" fill="#d0cdbe" stroke="#b9b6a8" stroke-width="0.9"/><path d="M265 16.4 H272.6" stroke="#c4c1b2" stroke-width="1"/></svg>
<div class="hd" style="left:7px;top:368px;width:116px;padding-right:3.2px;border-left:1px solid #1a1a1a"><span>日期/时间</span></div>
<div class="hd" style="left:123px;top:368px;width:63px;padding-right:3.2px"><span>手柄给定</span></div>
<div class="hd" style="left:186px;top:368px;width:80px;padding-right:3.2px"><span>实际速度<i>(%)</i></span></div>
<div class="hd" style="left:266px;top:368px;width:103px;padding-right:3.2px"><span>实际速度<i>(m/min)</i></span></div>
<div class="hd" style="left:369px;top:368px;width:63px;padding-right:3.2px"><span>起升高度</span></div>
<div class="hd" style="left:432px;top:368px;width:63px;padding-right:3.2px"><span>负载重量</span></div>
<div class="hd" style="left:495px;top:368px;width:39px;padding-right:3.2px"><span>力矩</span></div>
<div class="hd" style="left:534px;top:368px;width:40px;padding-right:3.2px"><span>频率</span></div>
<div class="hd" style="left:574px;top:368px;width:39px;padding-right:3.2px"><span>电压</span></div>
<div class="hd" style="left:613px;top:368px;width:40px;padding-right:3.2px"><span>电流</span></div>
<div class="hd" style="left:653px;top:368px;width:86px;padding-right:3.2px"><span>中间回路电压</span></div>
<div class="hd" style="left:739px;top:368px;width:51px;padding-right:3.2px"><span>状态字</span></div>
<div class="hd" style="left:790px;top:368px;width:52px;padding-right:3.2px"><span>控制字</span></div>
<div class="hd" style="left:842px;top:368px;width:62px;padding-right:3.2px"><span>限位开关</span></div>
<div class="hd" style="left:904px;top:368px;width:52px;padding-right:3.2px"><span>报警号</span></div>
<div class="hd" style="left:956px;top:368px;width:27px;border-right:none;text-align:left;padding-left:10.5px"><span>故</span></div>
<div class="hl" style="left:7px;top:398px;width:975px"></div>
<div class="hl" style="left:7px;top:411px;width:975px"></div>
<div class="hl" style="left:7px;top:425px;width:975px"></div>
<div class="hl" style="left:7px;top:439px;width:975px"></div>
<div class="hl" style="left:7px;top:452px;width:975px"></div>
<div class="hl" style="left:7px;top:466px;width:975px"></div>
<div class="hl" style="left:7px;top:480px;width:975px"></div>
<div class="hl" style="left:7px;top:493px;width:975px"></div>
<div class="hl" style="left:7px;top:507px;width:975px"></div>
<div class="hl" style="left:7px;top:520px;width:975px"></div>
<div class="hl" style="left:7px;top:534px;width:975px"></div>
<div class="vl" style="left:122px;top:384px;height:150px"></div>
<div class="vl" style="left:185px;top:384px;height:150px"></div>
<div class="vl" style="left:265px;top:384px;height:150px"></div>
<div class="vl" style="left:368px;top:384px;height:150px"></div>
<div class="vl" style="left:431px;top:384px;height:150px"></div>
<div class="vl" style="left:494px;top:384px;height:150px"></div>
<div class="vl" style="left:533px;top:384px;height:150px"></div>
<div class="vl" style="left:573px;top:384px;height:150px"></div>
<div class="vl" style="left:612px;top:384px;height:150px"></div>
<div class="vl" style="left:652px;top:384px;height:150px"></div>
<div class="vl" style="left:738px;top:384px;height:150px"></div>
<div class="vl" style="left:789px;top:384px;height:150px"></div>
<div class="vl" style="left:841px;top:384px;height:150px"></div>
<div class="vl" style="left:903px;top:384px;height:150px"></div>
<div class="vl" style="left:955px;top:384px;height:150px"></div>
<div class="c" style="left:7px;top:384.70px;width:114.4px">09<i class="h">-</i>01<i class="h">-</i>20<i> </i>10<i>:</i>18<i>:</i>26</div>
<div class="c" style="left:122px;top:384.70px;width:62.4px">0<i>.</i>00</div>
<div class="c" style="left:185px;top:384.70px;width:79.4px">0<i>.</i>00</div>
<div class="c" style="left:265px;top:384.70px;width:102.4px">0<i>.</i>00</div>
<div class="c" style="left:368px;top:384.70px;width:62.4px">40<i>.</i>00</div>
<div class="c" style="left:431px;top:384.70px;width:62.4px">0<i>.</i>00</div>
<div class="c" style="left:494px;top:384.70px;width:38.4px">0<i>.</i>00</div>
<div class="c" style="left:533px;top:384.70px;width:39.4px">0<i>.</i>00</div>
<div class="c" style="left:573px;top:384.70px;width:38.4px">0<i>.</i>00</div>
<div class="c" style="left:612px;top:384.70px;width:39.4px">0<i>.</i>00</div>
<div class="c" style="left:652px;top:384.70px;width:85.4px">0<i>.</i>00</div>
<div class="c" style="left:738px;top:384.70px;width:50.4px">0<i>.</i>00</div>
<div class="c" style="left:789px;top:384.70px;width:51.4px">0<i>.</i>00</div>
<div class="c" style="left:841px;top:384.70px;width:61.4px">0<i>.</i>00</div>
<div class="c" style="left:903px;top:384.70px;width:51.4px">0<i>.</i>00</div>
<div class="c" style="left:7px;top:398.35px;width:114.4px">09<i class="h">-</i>01<i class="h">-</i>20<i> </i>10<i>:</i>18<i>:</i>27</div>
<div class="c" style="left:122px;top:398.35px;width:62.4px">0<i>.</i>00</div>
<div class="c" style="left:185px;top:398.35px;width:79.4px">0<i>.</i>00</div>
<div class="c" style="left:265px;top:398.35px;width:102.4px">0<i>.</i>00</div>
<div class="c" style="left:368px;top:398.35px;width:62.4px">40<i>.</i>00</div>
<div class="c" style="left:431px;top:398.35px;width:62.4px">0<i>.</i>00</div>
<div class="c" style="left:494px;top:398.35px;width:38.4px">0<i>.</i>00</div>
<div class="c" style="left:533px;top:398.35px;width:39.4px">0<i>.</i>00</div>
<div class="c" style="left:573px;top:398.35px;width:38.4px">0<i>.</i>00</div>
<div class="c" style="left:612px;top:398.35px;width:39.4px">0<i>.</i>00</div>
<div class="c" style="left:652px;top:398.35px;width:85.4px">0<i>.</i>00</div>
<div class="c" style="left:738px;top:398.35px;width:50.4px">0<i>.</i>00</div>
<div class="c" style="left:789px;top:398.35px;width:51.4px">0<i>.</i>00</div>
<div class="c" style="left:841px;top:398.35px;width:61.4px">0<i>.</i>00</div>
<div class="c" style="left:903px;top:398.35px;width:51.4px">0<i>.</i>00</div>
<div class="c" style="left:7px;top:412.00px;width:114.4px">09<i class="h">-</i>01<i class="h">-</i>20<i> </i>10<i>:</i>18<i>:</i>27</div>
<div class="c" style="left:122px;top:412.00px;width:62.4px">0<i>.</i>00</div>
<div class="c" style="left:185px;top:412.00px;width:79.4px">0<i>.</i>00</div>
<div class="c" style="left:265px;top:412.00px;width:102.4px">0<i>.</i>00</div>
<div class="c" style="left:368px;top:412.00px;width:62.4px">40<i>.</i>00</div>
<div class="c" style="left:431px;top:412.00px;width:62.4px">0<i>.</i>00</div>
<div class="c" style="left:494px;top:412.00px;width:38.4px">0<i>.</i>00</div>
<div class="c" style="left:533px;top:412.00px;width:39.4px">0<i>.</i>00</div>
<div class="c" style="left:573px;top:412.00px;width:38.4px">0<i>.</i>00</div>
<div class="c" style="left:612px;top:412.00px;width:39.4px">0<i>.</i>00</div>
<div class="c" style="left:652px;top:412.00px;width:85.4px">0<i>.</i>00</div>
<div class="c" style="left:738px;top:412.00px;width:50.4px">0<i>.</i>00</div>
<div class="c" style="left:789px;top:412.00px;width:51.4px">0<i>.</i>00</div>
<div class="c" style="left:841px;top:412.00px;width:61.4px">0<i>.</i>00</div>
<div class="c" style="left:903px;top:412.00px;width:51.4px">0<i>.</i>00</div>
<div class="c" style="left:7px;top:425.65px;width:114.4px">09<i class="h">-</i>01<i class="h">-</i>20<i> </i>10<i>:</i>18<i>:</i>28</div>
<div class="c" style="left:122px;top:425.65px;width:62.4px">0<i>.</i>00</div>
<div class="c" style="left:185px;top:425.65px;width:79.4px">0<i>.</i>00</div>
<div class="c" style="left:265px;top:425.65px;width:102.4px">0<i>.</i>00</div>
<div class="c" style="left:368px;top:425.65px;width:62.4px">40<i>.</i>00</div>
<div class="c" style="left:431px;top:425.65px;width:62.4px">0<i>.</i>00</div>
<div class="c" style="left:494px;top:425.65px;width:38.4px">0<i>.</i>00</div>
<div class="c" style="left:533px;top:425.65px;width:39.4px">0<i>.</i>00</div>
<div class="c" style="left:573px;top:425.65px;width:38.4px">0<i>.</i>00</div>
<div class="c" style="left:612px;top:425.65px;width:39.4px">0<i>.</i>00</div>
<div class="c" style="left:652px;top:425.65px;width:85.4px">0<i>.</i>00</div>
<div class="c" style="left:738px;top:425.65px;width:50.4px">0<i>.</i>00</div>
<div class="c" style="left:789px;top:425.65px;width:51.4px">0<i>.</i>00</div>
<div class="c" style="left:841px;top:425.65px;width:61.4px">0<i>.</i>00</div>
<div class="c" style="left:903px;top:425.65px;width:51.4px">0<i>.</i>00</div>
<div class="c" style="left:7px;top:439.30px;width:114.4px">09<i class="h">-</i>01<i class="h">-</i>20<i> </i>10<i>:</i>18<i>:</i>28</div>
<div class="c" style="left:122px;top:439.30px;width:62.4px">0<i>.</i>00</div>
<div class="c" style="left:185px;top:439.30px;width:79.4px">0<i>.</i>00</div>
<div class="c" style="left:265px;top:439.30px;width:102.4px">0<i>.</i>00</div>
<div class="c" style="left:368px;top:439.30px;width:62.4px">40<i>.</i>00</div>
<div class="c" style="left:431px;top:439.30px;width:62.4px">0<i>.</i>00</div>
<div class="c" style="left:494px;top:439.30px;width:38.4px">0<i>.</i>00</div>
<div class="c" style="left:533px;top:439.30px;width:39.4px">0<i>.</i>00</div>
<div class="c" style="left:573px;top:439.30px;width:38.4px">0<i>.</i>00</div>
<div class="c" style="left:612px;top:439.30px;width:39.4px">0<i>.</i>00</div>
<div class="c" style="left:652px;top:439.30px;width:85.4px">0<i>.</i>00</div>
<div class="c" style="left:738px;top:439.30px;width:50.4px">0<i>.</i>00</div>
<div class="c" style="left:789px;top:439.30px;width:51.4px">0<i>.</i>00</div>
<div class="c" style="left:841px;top:439.30px;width:61.4px">0<i>.</i>00</div>
<div class="c" style="left:903px;top:439.30px;width:51.4px">0<i>.</i>00</div>
<div class="c" style="left:7px;top:452.95px;width:114.4px">09<i class="h">-</i>01<i class="h">-</i>20<i> </i>10<i>:</i>18<i>:</i>29</div>
<div class="c" style="left:122px;top:452.95px;width:62.4px">0<i>.</i>00</div>
<div class="c" style="left:185px;top:452.95px;width:79.4px">0<i>.</i>00</div>
<div class="c" style="left:265px;top:452.95px;width:102.4px">0<i>.</i>00</div>
<div class="c" style="left:368px;top:452.95px;width:62.4px">40<i>.</i>00</div>
<div class="c" style="left:431px;top:452.95px;width:62.4px">0<i>.</i>00</div>
<div class="c" style="left:494px;top:452.95px;width:38.4px">0<i>.</i>00</div>
<div class="c" style="left:533px;top:452.95px;width:39.4px">0<i>.</i>00</div>
<div class="c" style="left:573px;top:452.95px;width:38.4px">0<i>.</i>00</div>
<div class="c" style="left:612px;top:452.95px;width:39.4px">0<i>.</i>00</div>
<div class="c" style="left:652px;top:452.95px;width:85.4px">0<i>.</i>00</div>
<div class="c" style="left:738px;top:452.95px;width:50.4px">0<i>.</i>00</div>
<div class="c" style="left:789px;top:452.95px;width:51.4px">0<i>.</i>00</div>
<div class="c" style="left:841px;top:452.95px;width:61.4px">0<i>.</i>00</div>
<div class="c" style="left:903px;top:452.95px;width:51.4px">0<i>.</i>00</div>
<div class="c" style="left:7px;top:466.60px;width:114.4px">09<i class="h">-</i>01<i class="h">-</i>20<i> </i>10<i>:</i>18<i>:</i>29</div>
<div class="c" style="left:122px;top:466.60px;width:62.4px">0<i>.</i>00</div>
<div class="c" style="left:185px;top:466.60px;width:79.4px">0<i>.</i>00</div>
<div class="c" style="left:265px;top:466.60px;width:102.4px">0<i>.</i>00</div>
<div class="c" style="left:368px;top:466.60px;width:62.4px">40<i>.</i>00</div>
<div class="c" style="left:431px;top:466.60px;width:62.4px">0<i>.</i>00</div>
<div class="c" style="left:494px;top:466.60px;width:38.4px">0<i>.</i>00</div>
<div class="c" style="left:533px;top:466.60px;width:39.4px">0<i>.</i>00</div>
<div class="c" style="left:573px;top:466.60px;width:38.4px">0<i>.</i>00</div>
<div class="c" style="left:612px;top:466.60px;width:39.4px">0<i>.</i>00</div>
<div class="c" style="left:652px;top:466.60px;width:85.4px">0<i>.</i>00</div>
<div class="c" style="left:738px;top:466.60px;width:50.4px">0<i>.</i>00</div>
<div class="c" style="left:789px;top:466.60px;width:51.4px">0<i>.</i>00</div>
<div class="c" style="left:841px;top:466.60px;width:61.4px">0<i>.</i>00</div>
<div class="c" style="left:903px;top:466.60px;width:51.4px">0<i>.</i>00</div>
<div class="c" style="left:7px;top:480.25px;width:114.4px">09<i class="h">-</i>01<i class="h">-</i>20<i> </i>10<i>:</i>18<i>:</i>30</div>
<div class="c" style="left:122px;top:480.25px;width:62.4px">0<i>.</i>00</div>
<div class="c" style="left:185px;top:480.25px;width:79.4px">0<i>.</i>00</div>
<div class="c" style="left:265px;top:480.25px;width:102.4px">0<i>.</i>00</div>
<div class="c" style="left:368px;top:480.25px;width:62.4px">40<i>.</i>00</div>
<div class="c" style="left:431px;top:480.25px;width:62.4px">0<i>.</i>00</div>
<div class="c" style="left:494px;top:480.25px;width:38.4px">0<i>.</i>00</div>
<div class="c" style="left:533px;top:480.25px;width:39.4px">0<i>.</i>00</div>
<div class="c" style="left:573px;top:480.25px;width:38.4px">0<i>.</i>00</div>
<div class="c" style="left:612px;top:480.25px;width:39.4px">0<i>.</i>00</div>
<div class="c" style="left:652px;top:480.25px;width:85.4px">0<i>.</i>00</div>
<div class="c" style="left:738px;top:480.25px;width:50.4px">0<i>.</i>00</div>
<div class="c" style="left:789px;top:480.25px;width:51.4px">0<i>.</i>00</div>
<div class="c" style="left:841px;top:480.25px;width:61.4px">0<i>.</i>00</div>
<div class="c" style="left:903px;top:480.25px;width:51.4px">0<i>.</i>00</div>
<div class="c" style="left:7px;top:493.90px;width:114.4px">09<i class="h">-</i>01<i class="h">-</i>20<i> </i>10<i>:</i>18<i>:</i>30</div>
<div class="c" style="left:122px;top:493.90px;width:62.4px">0<i>.</i>00</div>
<div class="c" style="left:185px;top:493.90px;width:79.4px">0<i>.</i>00</div>
<div class="c" style="left:265px;top:493.90px;width:102.4px">0<i>.</i>00</div>
<div class="c" style="left:368px;top:493.90px;width:62.4px">40<i>.</i>00</div>
<div class="c" style="left:431px;top:493.90px;width:62.4px">0<i>.</i>00</div>
<div class="c" style="left:494px;top:493.90px;width:38.4px">0<i>.</i>00</div>
<div class="c" style="left:533px;top:493.90px;width:39.4px">0<i>.</i>00</div>
<div class="c" style="left:573px;top:493.90px;width:38.4px">0<i>.</i>00</div>
<div class="c" style="left:612px;top:493.90px;width:39.4px">0<i>.</i>00</div>
<div class="c" style="left:652px;top:493.90px;width:85.4px">0<i>.</i>00</div>
<div class="c" style="left:738px;top:493.90px;width:50.4px">0<i>.</i>00</div>
<div class="c" style="left:789px;top:493.90px;width:51.4px">0<i>.</i>00</div>
<div class="c" style="left:841px;top:493.90px;width:61.4px">0<i>.</i>00</div>
<div class="c" style="left:903px;top:493.90px;width:51.4px">0<i>.</i>00</div>
<div class="c" style="left:7px;top:507.55px;width:114.4px">09<i class="h">-</i>01<i class="h">-</i>20<i> </i>10<i>:</i>18<i>:</i>31</div>
<div class="c" style="left:122px;top:507.55px;width:62.4px">0<i>.</i>00</div>
<div class="c" style="left:185px;top:507.55px;width:79.4px">0<i>.</i>00</div>
<div class="c" style="left:265px;top:507.55px;width:102.4px">0<i>.</i>00</div>
<div class="c" style="left:368px;top:507.55px;width:62.4px">40<i>.</i>00</div>
<div class="c" style="left:431px;top:507.55px;width:62.4px">0<i>.</i>00</div>
<div class="c" style="left:494px;top:507.55px;width:38.4px">0<i>.</i>00</div>
<div class="c" style="left:533px;top:507.55px;width:39.4px">0<i>.</i>00</div>
<div class="c" style="left:573px;top:507.55px;width:38.4px">0<i>.</i>00</div>
<div class="c" style="left:612px;top:507.55px;width:39.4px">0<i>.</i>00</div>
<div class="c" style="left:652px;top:507.55px;width:85.4px">0<i>.</i>00</div>
<div class="c" style="left:738px;top:507.55px;width:50.4px">0<i>.</i>00</div>
<div class="c" style="left:789px;top:507.55px;width:51.4px">0<i>.</i>00</div>
<div class="c" style="left:841px;top:507.55px;width:61.4px">0<i>.</i>00</div>
<div class="c" style="left:903px;top:507.55px;width:51.4px">0<i>.</i>00</div>
<div class="c" style="left:7px;top:521.20px;width:114.4px">09<i class="h">-</i>01<i class="h">-</i>20<i> </i>10<i>:</i>18<i>:</i>31</div>
<div class="c" style="left:122px;top:521.20px;width:62.4px">0<i>.</i>00</div>
<div class="c" style="left:185px;top:521.20px;width:79.4px">0<i>.</i>00</div>
<div class="c" style="left:265px;top:521.20px;width:102.4px">0<i>.</i>00</div>
<div class="c" style="left:368px;top:521.20px;width:62.4px">40<i>.</i>00</div>
<div class="c" style="left:431px;top:521.20px;width:62.4px">0<i>.</i>00</div>
<div class="c" style="left:494px;top:521.20px;width:38.4px">0<i>.</i>00</div>
<div class="c" style="left:533px;top:521.20px;width:39.4px">0<i>.</i>00</div>
<div class="c" style="left:573px;top:521.20px;width:38.4px">0<i>.</i>00</div>
<div class="c" style="left:612px;top:521.20px;width:39.4px">0<i>.</i>00</div>
<div class="c" style="left:652px;top:521.20px;width:85.4px">0<i>.</i>00</div>
<div class="c" style="left:738px;top:521.20px;width:50.4px">0<i>.</i>00</div>
<div class="c" style="left:789px;top:521.20px;width:51.4px">0<i>.</i>00</div>
<div class="c" style="left:841px;top:521.20px;width:61.4px">0<i>.</i>00</div>
<div class="c" style="left:903px;top:521.20px;width:51.4px">0<i>.</i>00</div>
<div style="left:6px;top:546.0px;width:487px;height:16px;border:1px solid;border-color:#aca899 #fff #fff #aca899"></div>
<div style="left:495.5px;top:546.0px;width:485.5px;height:16px;border:1px solid;border-color:#aca899 #fff #fff #aca899"></div>
<svg style="left:969px;top:549.0px" width="13" height="13" viewBox="0 0 13 13"><path d="M12 1 L1 12 M12 5 L5 12 M12 9 L9 12" stroke="#aca899" stroke-width="1.3"/><path d="M12 2.3 L2.3 12 M12 6.3 L6.3 12 M12 10.3 L10.3 12" stroke="#fff" stroke-width="0.8"/></svg>
<div class="btn" style="left:8.8px;top:578.0px"><b></b><p style="">F1
</p></div>
<div class="btn" style="left:172.2px;top:578.0px"><b></b><p style="">F2
<span class="sx" style="transform:scaleX(1.14)">概要</span></p></div>
<div class="btn" style="left:335.5px;top:578.0px"><b></b><p style="">F3
AFE</p></div>
<div class="btn" style="left:498.8px;top:578.0px"><b></b><p style="">F4
<span class="sx" style="transform:scaleX(1.14)">起升1&amp;2</span></p></div>
<div class="btn" style="left:662.2px;top:578.0px"><b></b><p style="">F5
<span class="sx" style="transform:scaleX(1.14)">起升3</span></p></div>
<div class="btn" style="left:825.5px;top:578.0px"><b></b><p style="">F6
<span class="sx" style="transform:scaleX(1.14)">小车</span></p></div>
<div class="btn" style="left:8.8px;top:621.3px"><b></b><p style="">F7
<span class="sx" style="transform:scaleX(1.14)">起升1</span></p></div>
<div class="btn" style="left:172.2px;top:621.3px"><b></b><p style="">F8
<span class="sx" style="transform:scaleX(1.14)">起升2</span></p></div>
<div class="btn" style="left:335.5px;top:621.3px"><b></b><p style="">F9
<span class="sx" style="transform:scaleX(1.14)">大车</span></p></div>
<div class="btn" style="left:498.8px;top:621.3px"><b></b><p style="color:#808080">F10
</p></div>
<div class="btn" style="left:662.2px;top:621.3px"><b></b><p style="">F11
<span class="sx" style="transform:scaleX(1.14)">返回</span></p></div>
<div class="btn" style="left:825.5px;top:621.3px"><b></b><p style="">F12
<span class="sx" style="transform:scaleX(1.14)">监控总揽</span></p></div>
<svg style="left:0;top:0" width="991" height="665" viewBox="0 0 991 665"><path d="M6.4 575.9 H167 V618.5 H330 V661.2 H6.4 Z" fill="none" stroke="#0000ff" stroke-width="2.6" stroke-dasharray="7.8 3.8" stroke-linejoin="round"/><path d="M260.4 54.3 H379 V102 H360 L401 167.4 L330.5 102 H260.4 Z" fill="#00c896" stroke="#063" stroke-width="0.8" stroke-dasharray="1 1"/><path d="M337.7 251.2 H468.8 V299 H393.8 L233.3 353.5 L359.9 299 H337.7 Z" fill="#00c896" stroke="#063" stroke-width="0.8" stroke-dasharray="1 1"/><path d="M196.3 482.1 H321 V529.6 H250.5 L132.4 629.5 L218 529.6 H196.3 Z" fill="#00c896" stroke="#063" stroke-width="0.8" stroke-dasharray="1 1"/><path d="M543.9 455.7 H674.3 V499 H598.2 L533.3 588.8 L566.6 499 H543.9 Z" fill="#00c896" stroke="#063" stroke-width="0.8" stroke-dasharray="1 1"/></svg>
<div class="co" style="left:290.3px;top:64px">当前数值</div>
<div class="co" style="left:372.8px;top:261.5px">打印按钮</div>
<div class="co" style="left:226.8px;top:492.5px">选择按钮</div>
<div class="co" style="left:579.3px;top:465.3px">切换按钮</div>
<div style="left:0;top:663px;width:990px;height:1px;background:#b4c6ea"></div><div style="left:0;top:664px;width:991px;height:1px;background:#f4f6fa"></div>
<div style="left:0;top:0;width:991px;height:1px;background:#acb0c6"></div><div style="left:0;top:1px;width:1px;height:662px;background:#a8c0cc"></div>
</div></body></html>
